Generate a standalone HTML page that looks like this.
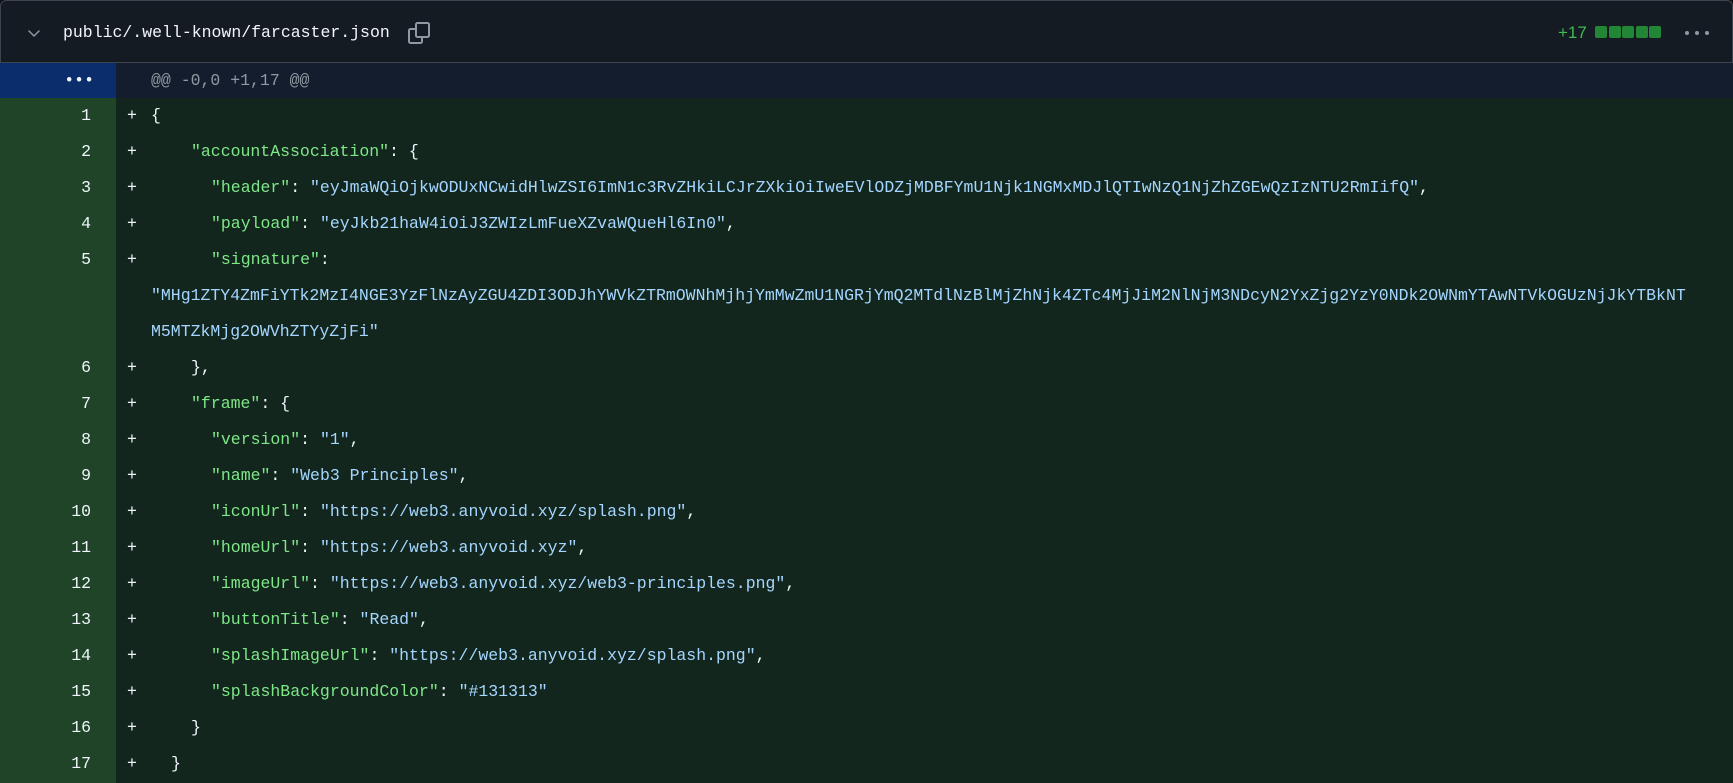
<!DOCTYPE html>
<html><head><meta charset="utf-8"><style>
*{margin:0;padding:0;box-sizing:border-box}
body{width:1733px;height:783px;overflow:hidden;background:#0d1117;font-family:"Liberation Mono",monospace;font-size:16.5px;color:#f0f6fc;position:relative}
.hdr{position:absolute;left:0;top:0;width:1733px;height:63px;background:#151b23;border:1px solid #3d444d;border-radius:6px 6px 0 0}
.fn{position:absolute;left:62px;top:22px;line-height:20px;color:#f0f6fc}
.add{position:absolute;left:1557px;top:21px;color:#3fb950;font-family:"Liberation Sans",sans-serif;font-size:17px;line-height:22px}
.sq{position:absolute;top:25px;width:12px;height:12px;background:#238636;border-radius:2px}
.dot{position:absolute;top:30px;width:4px;height:4px;border-radius:50%;background:#9198a1}
.row{position:absolute;left:0;width:1733px;height:36px;line-height:36px;white-space:pre}
.g{position:absolute;left:0;top:0;width:116px;height:36px;background:#1f4428;text-align:right;padding-right:25px}
.c{position:absolute;left:116px;top:0;right:0;height:36px;background:#12261e}
.p{position:absolute;left:127px}
.t{position:absolute}
.k{color:#7ee787}.s{color:#a5d6ff}
</style></head><body>
<div class="hdr">
<svg style="position:absolute;left:25px;top:24px" width="16" height="16" viewBox="0 0 16 16"><path d="M3 6l5 5 5-5" fill="none" stroke="#9198a1" stroke-width="1.5" stroke-linecap="round" stroke-linejoin="round"/></svg>
<div class="fn">public/.well-known/farcaster.json</div>
<svg style="position:absolute;left:406px;top:20px" width="24" height="24" viewBox="0 0 24 24"><rect x="2" y="8" width="13" height="14" rx="1.5" fill="none" stroke="#9198a1" stroke-width="2"/><rect x="9" y="2" width="13" height="14" rx="1.5" fill="#151b23" stroke="#9198a1" stroke-width="2"/></svg>
<div class="add">+17</div>
<div class="sq" style="left:1594px"></div><div class="sq" style="left:1608px"></div><div class="sq" style="left:1621px"></div><div class="sq" style="left:1635px"></div><div class="sq" style="left:1648px"></div>
<div class="dot" style="left:1684px"></div><div class="dot" style="left:1694px"></div><div class="dot" style="left:1704px"></div>
</div>
<div class="row" style="top:63px;height:35px"><div class="g" style="background:#0c2d6b;height:35px;line-height:35px;color:#f0f6fc;padding-right:22px">•••</div><div class="c" style="background:#131d2e;height:35px"></div><span class="t" style="left:151px;color:#9198a1;line-height:35px">@@ -0,0 +1,17 @@</span></div>

<div class="row" style="top:98px"><div class="g">1</div><div class="c"></div><span class="p">+</span><span class="t" style="left:151px">{</span></div>
<div class="row" style="top:134px"><div class="g">2</div><div class="c"></div><span class="p">+</span><span class="t" style="left:191px"><span class="k">"accountAssociation"</span>: {</span></div>
<div class="row" style="top:170px"><div class="g">3</div><div class="c"></div><span class="p">+</span><span class="t" style="left:211px"><span class="k">"header"</span>: <span class="s">"eyJmaWQiOjkwODUxNCwidHlwZSI6ImN1c3RvZHkiLCJrZXkiOiIweEVlODZjMDBFYmU1Njk1NGMxMDJlQTIwNzQ1NjZhZGEwQzIzNTU2RmIifQ"</span>,</span></div>
<div class="row" style="top:206px"><div class="g">4</div><div class="c"></div><span class="p">+</span><span class="t" style="left:211px"><span class="k">"payload"</span>: <span class="s">"eyJkb21haW4iOiJ3ZWIzLmFueXZvaWQueHl6In0"</span>,</span></div>
<div class="row" style="top:242px;height:108px"><div class="g" style="height:108px">5</div><div class="c" style="height:108px"></div><span class="p">+</span><span class="t" style="left:211px"><span class="k">"signature"</span>:</span><span class="t s" style="left:151px;top:36px">"MHg1ZTY4ZmFiYTk2MzI4NGE3YzFlNzAyZGU4ZDI3ODJhYWVkZTRmOWNhMjhjYmMwZmU1NGRjYmQ2MTdlNzBlMjZhNjk4ZTc4MjJiM2NlNjM3NDcyN2YxZjg2YzY0NDk2OWNmYTAwNTVkOGUzNjJkYTBkNT</span><span class="t s" style="left:151px;top:72px">M5MTZkMjg2OWVhZTYyZjFi"</span></div>
<div class="row" style="top:350px"><div class="g">6</div><div class="c"></div><span class="p">+</span><span class="t" style="left:191px">},</span></div>
<div class="row" style="top:386px"><div class="g">7</div><div class="c"></div><span class="p">+</span><span class="t" style="left:191px"><span class="k">"frame"</span>: {</span></div>
<div class="row" style="top:422px"><div class="g">8</div><div class="c"></div><span class="p">+</span><span class="t" style="left:211px"><span class="k">"version"</span>: <span class="s">"1"</span>,</span></div>
<div class="row" style="top:458px"><div class="g">9</div><div class="c"></div><span class="p">+</span><span class="t" style="left:211px"><span class="k">"name"</span>: <span class="s">"Web3 Principles"</span>,</span></div>
<div class="row" style="top:494px"><div class="g">10</div><div class="c"></div><span class="p">+</span><span class="t" style="left:211px"><span class="k">"iconUrl"</span>: <span class="s">"https://web3.anyvoid.xyz/splash.png"</span>,</span></div>
<div class="row" style="top:530px"><div class="g">11</div><div class="c"></div><span class="p">+</span><span class="t" style="left:211px"><span class="k">"homeUrl"</span>: <span class="s">"https://web3.anyvoid.xyz"</span>,</span></div>
<div class="row" style="top:566px"><div class="g">12</div><div class="c"></div><span class="p">+</span><span class="t" style="left:211px"><span class="k">"imageUrl"</span>: <span class="s">"https://web3.anyvoid.xyz/web3-principles.png"</span>,</span></div>
<div class="row" style="top:602px"><div class="g">13</div><div class="c"></div><span class="p">+</span><span class="t" style="left:211px"><span class="k">"buttonTitle"</span>: <span class="s">"Read"</span>,</span></div>
<div class="row" style="top:638px"><div class="g">14</div><div class="c"></div><span class="p">+</span><span class="t" style="left:211px"><span class="k">"splashImageUrl"</span>: <span class="s">"https://web3.anyvoid.xyz/splash.png"</span>,</span></div>
<div class="row" style="top:674px"><div class="g">15</div><div class="c"></div><span class="p">+</span><span class="t" style="left:211px"><span class="k">"splashBackgroundColor"</span>: <span class="s">"#131313"</span></span></div>
<div class="row" style="top:710px"><div class="g">16</div><div class="c"></div><span class="p">+</span><span class="t" style="left:191px">}</span></div>
<div class="row" style="top:746px;height:37px"><div class="g" style="height:37px">17</div><div class="c" style="height:37px"></div><span class="p">+</span><span class="t" style="left:171px">}</span></div>
</body></html>
